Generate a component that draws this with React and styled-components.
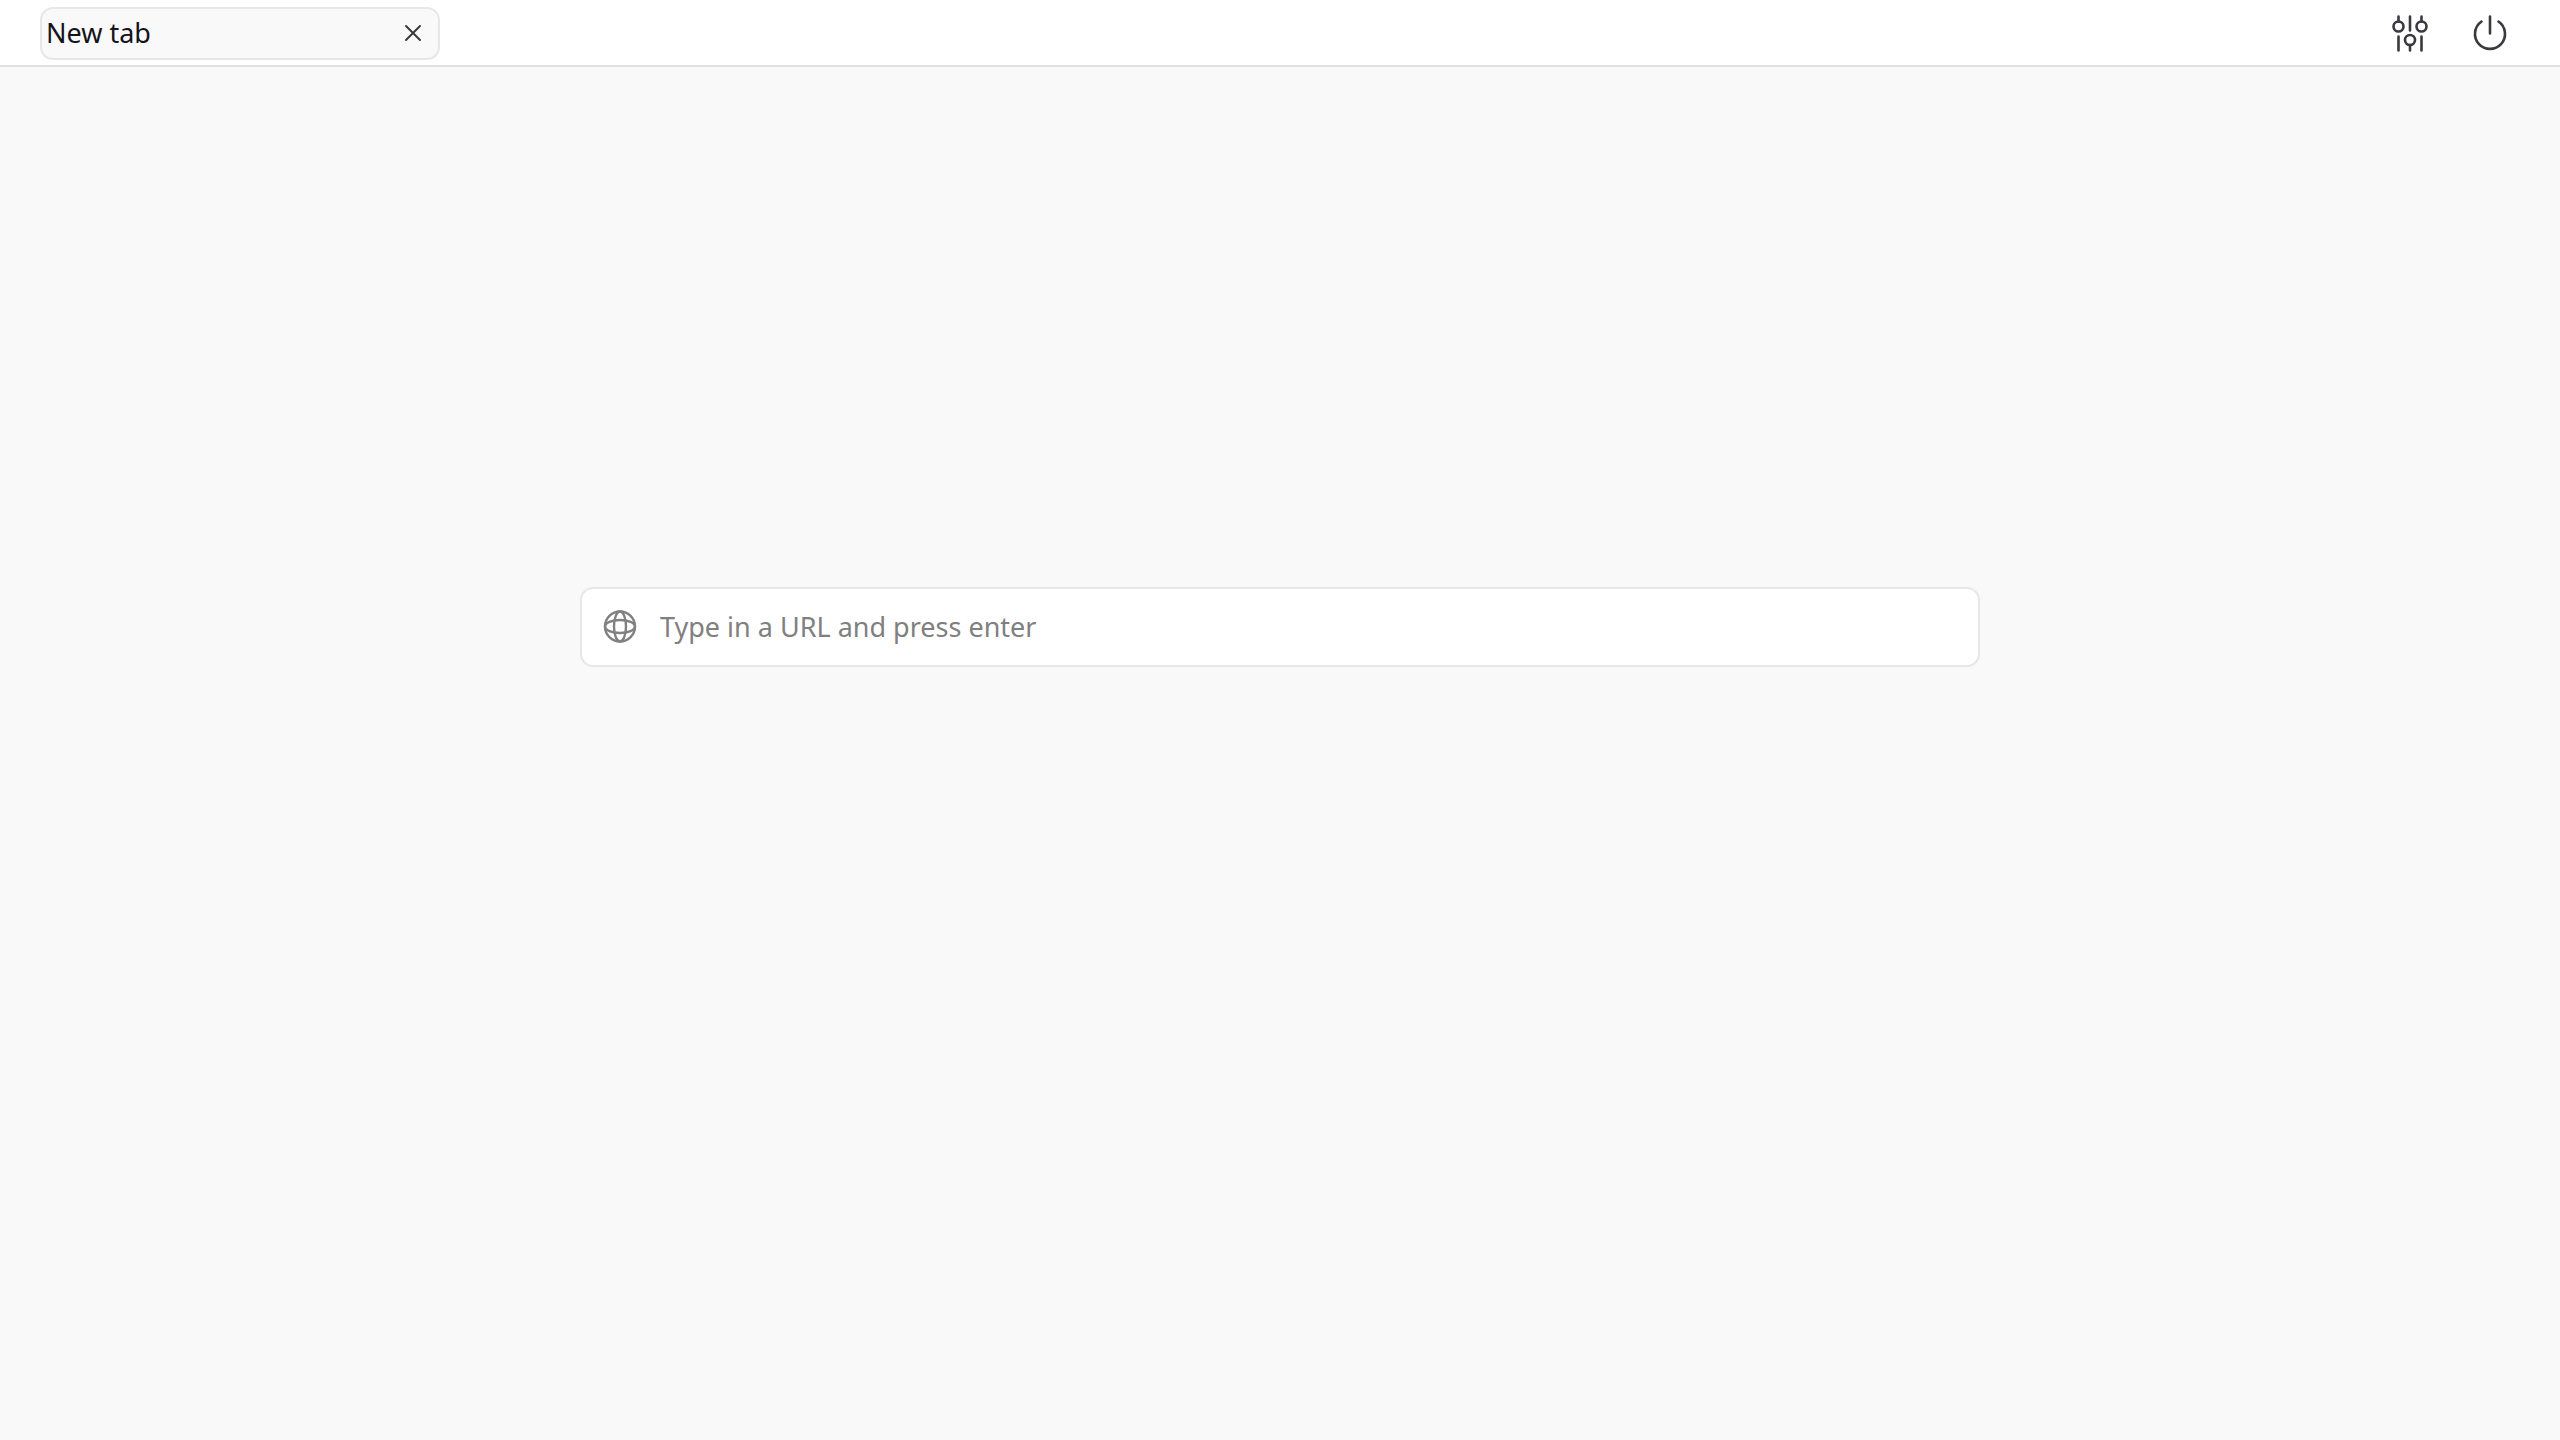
import React, { useState } from 'react';
import styled, { createGlobalStyle } from 'styled-components';

const GlobalStyle = createGlobalStyle`
  *,
  *::before,
  *::after {
    box-sizing: border-box;
  }

  body {
    margin: 0;
    background: #f9f9fa;
    color: #15141a;
    font-family: 'Noto Sans', sans-serif;
    font-size: 27px;
    line-height: 36px;
  }
`;

const Page = styled.div`
  display: flex;
  flex-direction: column;
  min-height: 100vh;
`;

const Header = styled.header`
  display: flex;
  align-items: center;
  justify-content: space-between;
  padding: 7px 50px 5px 40px;
  background: #ffffff;
  border-bottom: 2px solid #e0e0e1;
`;

const Tab = styled.div`
  display: flex;
  align-items: center;
  justify-content: space-between;
  width: 400px;
  height: 53px;
  padding: 0 15px 2px 4px;
  background: #f9f9fa;
  border: 2px solid #e7e7e7;
  border-radius: 13px;
`;

const TabTitle = styled.span`
  overflow: hidden;
  text-overflow: ellipsis;
  white-space: nowrap;
`;

const Actions = styled.div`
  display: flex;
  gap: 40px;
  padding-bottom: 2px;
`;

const IconButton = styled.button`
  display: flex;
  padding: 0;
  border: none;
  background: transparent;
  color: #3a393f;
  cursor: pointer;
`;

const Icon = styled.svg`
  display: block;
  flex: none;
  width: ${props => props.$size}px;
  height: ${props => props.$size}px;
  fill: none;
  stroke: currentColor;
  stroke-width: ${props => props.$weight || 2};
  stroke-linecap: round;
`;

const Main = styled.main`
  flex: 1;
  padding: calc(40vh - 56px) 24px 24px;
`;

const SearchBox = styled.form`
  display: flex;
  align-items: center;
  gap: 20px;
  max-width: 1400px;
  height: 80px;
  margin: 0 auto;
  padding: 0 18px;
  background: #ffffff;
  border: 2px solid #e7e7e7;
  border-radius: 13px;
  color: #808080;
`;

const UrlInput = styled.input`
  flex: 1;
  min-width: 0;
  padding: 0;
  border: none;
  outline: none;
  background: transparent;
  color: #15141a;
  font: inherit;

  &::placeholder {
    color: #808080;
    opacity: 1;
  }
`;

const CloseIcon = () => (
  <Icon $size={20} viewBox="0 0 20 20" aria-hidden="true">
    <path d="M3 3l14 14M17 3L3 17" />
  </Icon>
);

const SlidersIcon = () => (
  <Icon $size={40} $weight={2.6} viewBox="0 0 40 40" aria-hidden="true">
    <circle cx="8.5" cy="13.5" r="5" />
    <circle cx="20" cy="27" r="5" />
    <circle cx="31.5" cy="13.5" r="5" />
    <path d="M8.5 3.5v5M31.5 3.5v5M20 3.5v14M20 32v5.5M8.5 23.5v14M31.5 23.5v14" />
  </Icon>
);

const PowerIcon = () => (
  <Icon $size={40} $weight={2.6} viewBox="0 0 40 40" aria-hidden="true">
    <path d="M20 3.5v17M11.5 8.5a15 15 0 1 0 17 0" />
  </Icon>
);

const GlobeIcon = () => (
  <Icon $size={40} $weight={2.4} viewBox="0 0 40 40" aria-hidden="true">
    <circle cx="20" cy="19.5" r="15" />
    <ellipse cx="20" cy="19.5" rx="6" ry="15" />
    <ellipse cx="20" cy="19.5" rx="15" ry="6.5" />
  </Icon>
);

const App = () => {
  const [url, setUrl] = useState('');

  return (
    <Page>
      <GlobalStyle />
      <Header>
        <Tab>
          <TabTitle>New tab</TabTitle>
          <IconButton type="button" aria-label="Close tab">
            <CloseIcon />
          </IconButton>
        </Tab>
        <Actions>
          <IconButton type="button" aria-label="Settings">
            <SlidersIcon />
          </IconButton>
          <IconButton type="button" aria-label="Power">
            <PowerIcon />
          </IconButton>
        </Actions>
      </Header>
      <Main>
        <SearchBox onSubmit={e => e.preventDefault()}>
          <GlobeIcon />
          <UrlInput
            type="text"
            aria-label="URL"
            placeholder="Type in a URL and press enter"
            value={url}
            onChange={e => setUrl(e.target.value)}
          />
        </SearchBox>
      </Main>
    </Page>
  );
};

export default App;
